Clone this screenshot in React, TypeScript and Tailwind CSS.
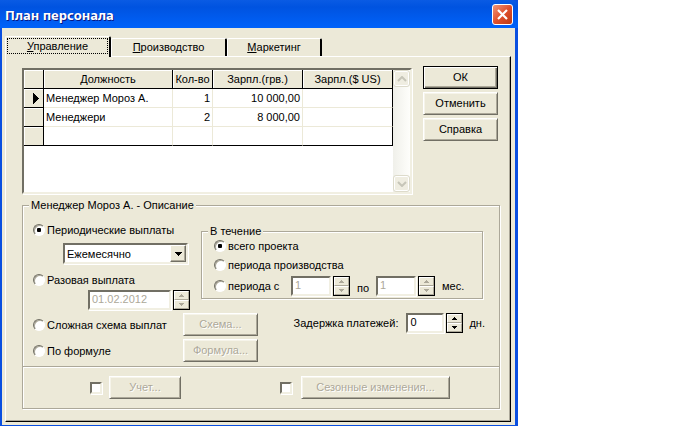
import { useState } from "react";
import type { InputHTMLAttributes, ReactNode } from "react";
import clsx from "clsx";

const sunken =
  "border-2 border-t-[#716f64] border-l-[#716f64] border-r-[#f1efe2] border-b-[#f1efe2] shadow-[1px_1px_0_#fff]";

function PushButton({
  children,
  disabled,
  isDefault,
  className,
}: {
  children: ReactNode;
  disabled?: boolean;
  isDefault?: boolean;
  className?: string;
}) {
  return (
    <button
      type="button"
      disabled={disabled}
      className={clsx(
        "h-[23px] shrink-0 border bg-[#ece9d8] pb-[2px] text-center leading-[14px]",
        isDefault
          ? "border-black shadow-[inset_1px_1px_0_#fff,inset_-1px_-1px_0_#716f64,inset_-2px_-2px_0_#aca899]"
          : "border-t-white border-l-white border-r-[#716f64] border-b-[#716f64] shadow-[inset_1px_1px_0_#f6f4ea,inset_-1px_-1px_0_#aca899]",
        disabled && "text-[#aca899] [text-shadow:1px_1px_0_#fff]",
        className,
      )}
    >
      {children}
    </button>
  );
}

function Radio({ label, className, ...rest }: { label: string } & InputHTMLAttributes<HTMLInputElement>) {
  return (
    <label className={clsx("flex items-center gap-[2px] whitespace-nowrap", className)}>
      <input
        type="radio"
        className="relative size-3 shrink-0 appearance-none rounded-full border border-t-[#716f64] border-r-white border-b-white border-l-[#716f64] bg-white shadow-[inset_1px_1px_0_#aca899] checked:before:absolute checked:before:top-[3px] checked:before:left-[3px] checked:before:size-1 checked:before:rounded-[1px] checked:before:bg-black"
        {...rest}
      />
      <span>{label}</span>
    </label>
  );
}

function Spinner({ disabled, name }: { disabled?: boolean; name: string }) {
  const half =
    "flex min-h-0 flex-1 items-center justify-center border border-t-white border-l-white border-r-[#aca899] border-b-[#aca899] bg-[#ece9d8]";
  const color = disabled ? "#aca899" : "#000";
  return (
    <span className="flex h-5 w-[17px] shrink-0 flex-col border border-black">
      <button type="button" disabled={disabled} aria-label={`${name}: больше`} className={half}>
        <svg width="5" height="3" viewBox="0 0 5 3" shapeRendering="crispEdges">
          <path d="M2 0h1v1h1v1h1v1H0V2h1V1h1z" fill={color} />
        </svg>
      </button>
      <button type="button" disabled={disabled} aria-label={`${name}: меньше`} className={half}>
        <svg width="5" height="3" viewBox="0 0 5 3" shapeRendering="crispEdges">
          <path d="M0 0h5v1H4v1H3v1H2V2H1V1H0z" fill={color} />
        </svg>
      </button>
    </span>
  );
}

function SpinField({
  name,
  value,
  disabled,
  className,
}: {
  name: string;
  value: string;
  disabled?: boolean;
  className: string;
}) {
  return (
    <span className="flex items-start gap-[2px]">
      <input
        type="text"
        aria-label={name}
        defaultValue={value}
        disabled={disabled}
        className={clsx("h-5 bg-white px-[2px] pb-[2px] leading-[14px] disabled:text-[#aca899]", sunken, className)}
      />
      <Spinner disabled={disabled} name={name} />
    </span>
  );
}

function Group({ title, className, children }: { title: string; className?: string; children: ReactNode }) {
  return (
    <fieldset
      className={clsx(
        "min-w-0 border border-[#aca899] shadow-[inset_1px_1px_0_#fff,1px_1px_0_#fff]",
        className,
      )}
    >
      <legend className="relative ml-[6px] bg-[#ece9d8] px-[2px] leading-[14px]">{title}</legend>
      {children}
    </fieldset>
  );
}

const tabs = ["Управление", "Производство", "Маркетинг"];

function Tabs() {
  const [active, setActive] = useState(0);
  const widths = ["w-[106px]", "w-[116px]", "w-[95px]"];
  return (
    <div role="tablist" className="flex h-5 items-end">
      {tabs.map((tab, i) => (
        <button
          key={tab}
          type="button"
          role="tab"
          aria-selected={i === active}
          onClick={() => setActive(i)}
          className={clsx(
            "rounded-t-[2px] border-t border-r-2 border-l border-t-white border-r-black border-l-white bg-[#ece9d8]",
            i === active ? "relative z-10 -mb-px h-[21px] p-px pb-[3px]" : "h-[18px] pb-[2px]",
            widths[i],
          )}
        >
          <span
            className={clsx(
              "flex items-center justify-center",
              i === active && "h-full border border-dotted border-black",
            )}
          >
            <span>
              <u className="underline-offset-1">{tab[0]}</u>
              {tab.slice(1)}
            </span>
          </span>
        </button>
      ))}
    </div>
  );
}

const staff = [
  { post: "Менеджер Мороз А.", count: "1", uah: "10 000,00", usd: "" },
  { post: "Менеджери", count: "2", uah: "8 000,00", usd: "" },
  { post: "", count: "", uah: "", usd: "" },
];

function StaffGrid() {
  const head = "h-[19px] border-r border-b border-black bg-[#ece9d8] p-0 text-center font-normal shadow-[inset_1px_1px_0_#fff]";
  return (
    <div className={clsx("flex h-[126px] min-w-0 flex-1 bg-white", sunken)}>
      <div className="min-w-0 flex-1">
        <table className="w-full table-fixed border-separate border-spacing-0 leading-[14px]">
          <colgroup>
            <col className="w-5" />
            <col />
            <col className="w-10" />
            <col className="w-[90px]" />
            <col className="w-[90px]" />
          </colgroup>
          <thead>
            <tr>
              <th className={head} aria-label="Выбор" />
              <th className={head}>Должность</th>
              <th className={head}>Кол-во</th>
              <th className={head}>Зарпл.(грв.)</th>
              <th className={head}>Зарпл.($ US)</th>
            </tr>
          </thead>
          <tbody>
            {staff.map((row, i) => {
              const last = i === staff.length - 1;
              const cell = clsx("h-[19px] border-r border-b p-0 px-[2px]", last ? "border-b-black" : "border-b-[#ece9d8]");
              return (
                <tr key={i}>
                  <th className={head}>
                    {i === 0 && (
                      <svg className="ml-[9px]" width="6" height="11" viewBox="0 0 6 11" shapeRendering="crispEdges">
                        <path d="M0 0h1v1h1v1h1v1h1v1h1v1h1v1H5v1H4v1H3v1H2v1H1v1H0z" fill="#000" />
                      </svg>
                    )}
                  </th>
                  <td className={clsx(cell, "border-r-[#ece9d8]")}>{row.post}</td>
                  <td className={clsx(cell, "border-r-[#ece9d8] text-right")}>{row.count}</td>
                  <td className={clsx(cell, "border-r-[#ece9d8] text-right")}>{row.uah}</td>
                  <td className={clsx(cell, "border-r-black text-right")}>{row.usd}</td>
                </tr>
              );
            })}
          </tbody>
        </table>
      </div>
      <div className="flex w-[17px] shrink-0 flex-col justify-between bg-linear-to-r from-[#f0f0ea] to-[#fefefb]">
        {["M1 5l4-4 4 4", "M1 1l4 4 4-4"].map((d, i) => (
          <button
            key={d}
            type="button"
            disabled
            aria-label={i === 0 ? "Вверх" : "Вниз"}
            className="flex h-[17px] items-center justify-center rounded-[3px] border border-[#dddbcb] bg-[#efede1] shadow-[inset_0_0_0_1px_#fff]"
          >
            <svg width="10" height="6" viewBox="0 0 10 6">
              <path d={d} fill="none" stroke="#c6c5b8" strokeWidth="2" />
            </svg>
          </button>
        ))}
      </div>
    </div>
  );
}

function CheckBox({ label }: { label: string }) {
  return (
    <input
      type="checkbox"
      aria-label={label}
      className={clsx("size-3 shrink-0 appearance-none bg-white", sunken)}
    />
  );
}

export default function App() {
  return (
    <div className="w-full max-w-[518px] bg-[#0a4fe0] pr-[3px] pb-px pl-[2px] font-['Liberation_Sans',Arial,sans-serif] text-[11px] leading-[14px] text-black">
      <header className="-mr-[3px] -ml-[2px] flex h-7 items-center justify-between rounded-tr-[6px] bg-linear-to-b from-[#0a5be4] via-[#0053e0] via-25% to-[#0062fa] pr-[5px] pl-[5px]">
        <h1 className="pt-[2px] font-['Noto_Sans','Open_Sans',sans-serif] text-[13px] leading-[18px] font-bold text-white [text-shadow:1px_1px_0_#0a1883]">
          План персонала
        </h1>
        <button
          type="button"
          aria-label="Закрыть"
          className="flex size-[21px] items-center justify-center rounded-[3px] border border-white bg-linear-to-br from-[#ee9478] via-[#e0502c] to-[#bc3a12]"
        >
          <svg width="13" height="13" viewBox="0 0 13 13">
            <path d="M2 2l9 9M11 2l-9 9" stroke="#fff" strokeWidth="2.2" />
          </svg>
        </button>
      </header>

      <main className="bg-[#ece9d8] pt-2 pr-1 pb-[3px] pl-[3px]">
        <Tabs />
        <section className="border border-t-white border-r-black border-b-black border-l-white pt-[9px] pr-[10px] pb-3 pl-4 shadow-[inset_-1px_-1px_0_#aca899]">
          <div className="flex gap-[11px] pr-[2px]">
            <div className="flex min-w-0 flex-1 pt-[2px]">
              <StaffGrid />
            </div>
            <div className="flex w-[75px] shrink-0 flex-col gap-[3px]">
              <PushButton isDefault>ОК</PushButton>
              <PushButton>Отменить</PushButton>
              <PushButton>Справка</PushButton>
            </div>
          </div>

          <Group title="Менеджер Мороз А. - Описание" className="mt-1">
            <div className="flex justify-between pr-4 pl-[10px]">
              <div className="w-[168px] shrink-0 pt-[10px]">
                <Radio name="scheme" label="Периодические выплаты" defaultChecked className="h-4" />
                <div className="relative mt-[5px] ml-[30px] w-[125px]">
                  <select
                    aria-label="Периодичность"
                    className={clsx("block h-[21px] w-full appearance-none bg-white pl-[2px] leading-[14px]", sunken)}
                  >
                    <option>Ежемесячно</option>
                  </select>
                  <span className="pointer-events-none absolute top-[2px] right-[2px] flex h-[17px] w-4 items-center justify-center border border-t-white border-r-[#716f64] border-b-[#716f64] border-l-white bg-[#ece9d8] shadow-[inset_-1px_-1px_0_#aca899]">
                    <svg width="7" height="4" viewBox="0 0 7 4" shapeRendering="crispEdges">
                      <path d="M0 0h7v1H6v1H5v1H4v1H3V3H2V2H1V1H0z" />
                    </svg>
                  </span>
                </div>
                <Radio name="scheme" label="Разовая выплата" className="mt-2 h-4" />
                <div className="mt-[2px] ml-[55px]">
                  <SpinField name="Дата выплаты" value="01.02.2012" disabled className="w-[83px]" />
                </div>
              </div>

              <div className="min-w-0 flex-1 pt-3">
                <Group title="В течение">
                  <div className="pt-px pb-[2px] pl-3">
                    <Radio name="period" label="всего проекта" defaultChecked />
                    <Radio name="period" label="периода производства" className="mt-[5px]" />
                    <div className="mt-1 flex items-center">
                      <Radio name="period" label="периода с" className="w-[77px]" />
                      <SpinField name="Период с" value="1" disabled className="w-10" />
                      <span className="w-[26px] pt-1 text-center">по</span>
                      <SpinField name="Период по" value="1" disabled className="w-10" />
                      <span className="ml-[7px]">мес.</span>
                    </div>
                  </div>
                </Group>
              </div>
            </div>

            <div className="flex justify-between pt-[3px] pb-1 pl-[10px]">
              <div className="flex w-[225px] flex-col gap-[3px]">
                <div className="flex items-center justify-between">
                  <Radio name="scheme" label="Сложная схема выплат" />
                  <PushButton disabled className="w-[75px]">Схема...</PushButton>
                </div>
                <div className="flex items-center justify-between">
                  <Radio name="scheme" label="По формуле" />
                  <PushButton disabled className="w-[75px]">Формула...</PushButton>
                </div>
              </div>
              <div className="flex h-5 items-center pr-[14px]">
                <span className="mr-2">Задержка платежей:</span>
                <SpinField name="Задержка платежей" value="0" className="w-[38px]" />
                <span className="ml-[6px]">дн.</span>
              </div>
            </div>

            <div className="flex items-center border-t border-[#aca899] py-[9px] pl-[67px] shadow-[inset_0_1px_0_#fff]">
              <CheckBox label="Учет" />
              <PushButton disabled className="ml-[7px] w-[72px]">Учет...</PushButton>
              <span className="w-[99px]" />
              <CheckBox label="Сезонные изменения" />
              <PushButton disabled className="ml-[9px] w-[149px]">Сезонные изменения...</PushButton>
            </div>
          </Group>
        </section>
      </main>
    </div>
  );
}
